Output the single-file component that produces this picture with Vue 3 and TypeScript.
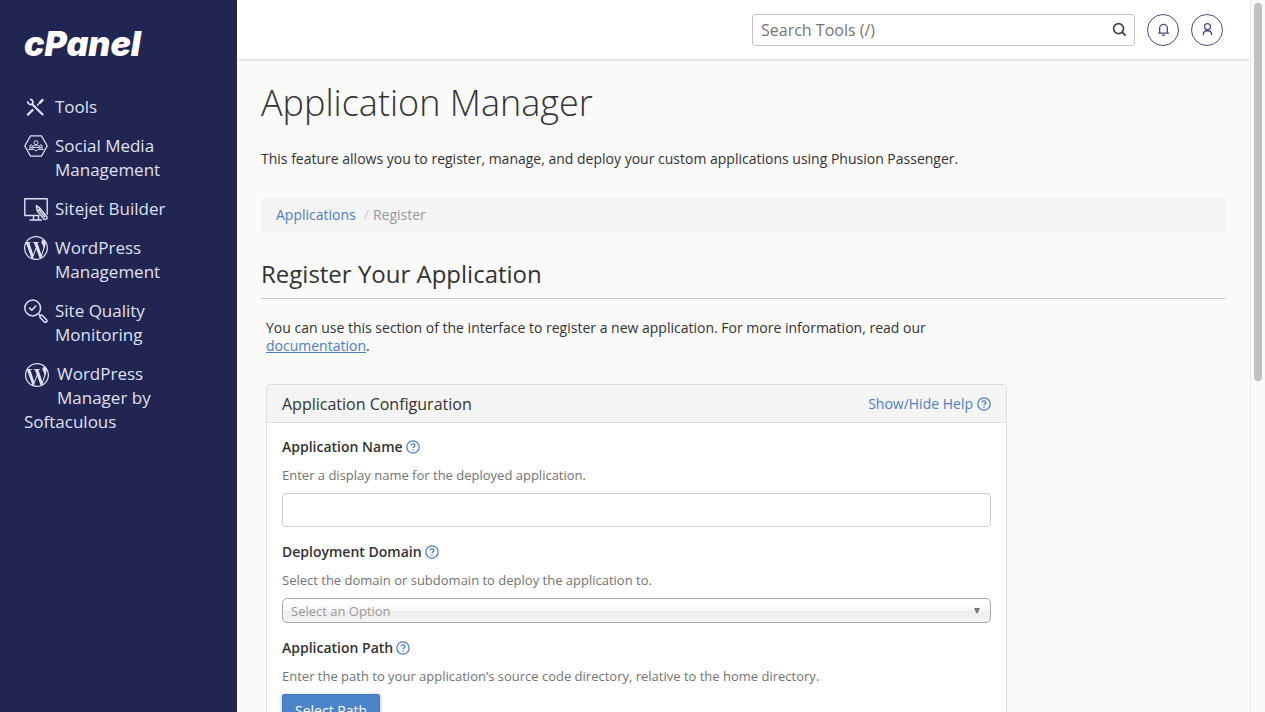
<script setup lang="ts">
import { ref } from 'vue'

interface NavItem {
  label: string
  icon: 'tools' | 'social' | 'sitejet' | 'wordpress' | 'quality'
  wrapUnder?: boolean
}

const navItems: NavItem[] = [
  { label: 'Tools', icon: 'tools' },
  { label: 'Social Media Management', icon: 'social' },
  { label: 'Sitejet Builder', icon: 'sitejet' },
  { label: 'WordPress Management', icon: 'wordpress' },
  { label: 'Site Quality Monitoring', icon: 'quality' },
  { label: 'WordPress Manager by Softaculous', icon: 'wordpress', wrapUnder: true },
]

const search = ref('')
const appName = ref('')
const domain = ref('')
</script>

<template>
  <div class="shell">
    <aside class="sidebar">
      <a class="brand" href="#" aria-label="cPanel home">cPanel</a>
      <nav class="nav" aria-label="Main">
        <a
          v-for="item in navItems"
          :key="item.label"
          href="#"
          class="nav-item"
          :class="{ 'wrap-under': item.wrapUnder }"
        >
          <svg class="nav-icon" viewBox="0 0 24 24" aria-hidden="true">
            <g v-if="item.icon === 'tools'" fill="none" stroke="currentColor" stroke-linecap="round">
              <path d="M3.9 19.600 8.600 15" stroke-width="2.200" />
              <path d="M13.400 10.200 17 6.600" stroke-width="1.300" />
              <path d="M16 7.600 18.400 5.200" stroke-width="2.600" />
              <path d="M8.200 9.200 18.600 19.400" stroke-width="2.100" />
              <path d="M3.700 6.800a3.200 3.200 0 0 0 4.800 2.300 3.200 3.200 0 0 0-1.900-4.700" stroke-width="1.700" />
            </g>
            <g v-else-if="item.icon === 'social'" fill="none" stroke="currentColor" stroke-linejoin="round">
              <path d="M6.600 1.800h10.800L23.200 12l-5.800 10.200H6.600L.8 12z" stroke-width="1.300" />
              <g stroke-width="1">
                <circle cx="12" cy="8.700" r="2" />
                <path d="M8.700 13.400c.3-3.200 6.300-3.200 6.600 0zM4.700 15.400c.2-2.200 4.600-2.200 4.800 0zM14.500 15.400c.2-2.200 4.600-2.200 4.800 0z" />
                <circle cx="7.100" cy="12.200" r="1.300" />
                <circle cx="16.900" cy="12.200" r="1.300" />
                <path d="M10.200 15.600 12 17l1.800-1.400" />
              </g>
            </g>
            <g v-else-if="item.icon === 'sitejet'" fill="none" stroke="currentColor" stroke-width="1.400" stroke-linejoin="round">
              <path d="M15.500 18.500H.8V1.800h22.400v16" />
              <path d="M9.500 18.500v4M14.500 18.500v4M5.500 23h12.500" />
              <path d="m12.300 8.600.9 5.200 6.700 8.200a1.900 1.900 0 0 0 2.900-2.400l-6.600-8.200zM13.600 13.800l2.600-2.200M15.500 13.200l5.500 7" />
            </g>
            <path
              v-else-if="item.icon === 'wordpress'"
              fill="currentColor"
              d="M21.469 6.825c.84 1.537 1.318 3.3 1.318 5.175 0 3.979-2.156 7.456-5.363 9.325l3.295-9.527c.615-1.54.82-2.771.82-3.864 0-.405-.026-.78-.07-1.11m-7.981.105c.647-.03 1.232-.105 1.232-.105.582-.075.514-.93-.067-.899 0 0-1.755.135-2.88.135-1.064 0-2.85-.15-2.85-.15-.585-.03-.661.855-.075.885 0 0 .54.061 1.125.09l1.68 4.605-2.37 7.08L5.354 6.9c.649-.03 1.234-.1 1.234-.1.585-.075.516-.93-.065-.896 0 0-1.746.138-2.874.138-.2 0-.438-.008-.69-.015C4.911 3.15 8.235 1.215 12 1.215c2.809 0 5.365 1.072 7.286 2.833-.046-.003-.091-.009-.141-.009-1.06 0-1.812.923-1.812 1.914 0 .89.513 1.643 1.06 2.531.411.72.89 1.643.89 2.977 0 .915-.354 1.994-.821 3.479l-1.075 3.585-3.9-11.61.001.014zM12 22.784c-1.059 0-2.081-.153-3.048-.437l3.237-9.406 3.315 9.087c.024.053.05.101.078.149-1.12.393-2.325.607-3.582.607M1.211 12c0-1.564.336-3.05.935-4.39L7.29 21.709C3.694 19.96 1.212 16.271 1.211 12M12 0C5.385 0 0 5.385 0 12s5.385 12 12 12 12-5.385 12-12S18.615 0 12 0"
            />
            <g v-else fill="none" stroke="currentColor" stroke-width="1.500" stroke-linecap="round" stroke-linejoin="round">
              <circle cx="8.700" cy="9" r="7.900" />
              <path d="m5.600 9.100 2.200 2.100 4-4.200M14.500 14.800l2 2" />
              <path d="M16.300 18.700c-1.400-1.500.7-3.500 2.200-2.200l4 4.200c1.400 1.500-.7 3.500-2.200 2.200z" />
            </g>
          </svg>
          <span class="nav-label">{{ item.label }}</span>
        </a>
      </nav>
    </aside>

    <div class="page">
      <header class="topbar">
        <form class="search" role="search" @submit.prevent>
          <input v-model="search" type="text" placeholder="Search Tools (/)" aria-label="Search Tools" />
          <button type="submit" aria-label="Search">
            <svg viewBox="0 0 16 16" aria-hidden="true">
              <circle cx="7" cy="7" r="5.300" fill="none" stroke="currentColor" stroke-width="1.800" />
              <path d="m11 11 3.500 3.500" stroke="currentColor" stroke-width="2" />
            </svg>
          </button>
        </form>
        <button class="round" type="button" aria-label="Notifications">
          <svg viewBox="0 0 16 16" aria-hidden="true">
            <path d="M2.500 11.800h11M3.900 11.800V6.700a4.100 4.100 0 0 1 8.200 0v5.100M6.700 14h2.600" fill="none" stroke="currentColor" stroke-width="1.400" stroke-linecap="round" />
          </svg>
        </button>
        <button class="round" type="button" aria-label="User menu">
          <svg viewBox="0 0 16 16" aria-hidden="true">
            <circle cx="8" cy="5" r="3.200" fill="none" stroke="currentColor" stroke-width="1.400" />
            <path d="M3.500 14c0-3.300 1.800-4.700 4.500-4.700s4.500 1.400 4.500 4.700" fill="none" stroke="currentColor" stroke-width="1.400" />
          </svg>
        </button>
      </header>

      <main class="content">
        <h1>Application Manager</h1>
        <p class="lead">This feature allows you to register, manage, and deploy your custom applications using Phusion Passenger.</p>

        <nav class="breadcrumb" aria-label="Breadcrumb">
          <a href="#">Applications</a>
          <span class="slash">/</span>
          <span>Register</span>
        </nav>

        <h2>Register Your Application</h2>

        <section class="register">
          <p class="intro">
            You can use this section of the interface to register a new application. For more information, read our
            <a href="#">documentation</a>.
          </p>

          <form class="panel" @submit.prevent>
            <div class="panel-head">
              <h3>Application Configuration</h3>
              <button class="link" type="button">
                Show/Hide Help
                <svg class="help-icon" viewBox="0 0 14 14" aria-hidden="true">
                  <circle cx="7" cy="7" r="6.200" />
                  <path d="M5.200 5.600c0-2.300 3.700-2.300 3.700 0C8.900 6.900 7 6.900 7 8.300M7 9.600v1.200" />
                </svg>
              </button>
            </div>
            <div class="panel-body">
              <div class="field">
                <div class="field-title">
                  <label for="app-name">Application Name</label>
                  <button class="link" type="button" aria-label="Help for Application Name">
                    <svg class="help-icon" viewBox="0 0 14 14" aria-hidden="true">
                      <circle cx="7" cy="7" r="6.200" />
                      <path d="M5.200 5.600c0-2.300 3.700-2.300 3.700 0C8.900 6.900 7 6.900 7 8.300M7 9.600v1.200" />
                    </svg>
                  </button>
                </div>
                <p>Enter a display name for the deployed application.</p>
                <input id="app-name" v-model="appName" class="text-box" type="text" />
              </div>

              <div class="field">
                <div class="field-title">
                  <label for="domain">Deployment Domain</label>
                  <button class="link" type="button" aria-label="Help for Deployment Domain">
                    <svg class="help-icon" viewBox="0 0 14 14" aria-hidden="true">
                      <circle cx="7" cy="7" r="6.200" />
                      <path d="M5.200 5.600c0-2.300 3.700-2.300 3.700 0C8.900 6.900 7 6.900 7 8.300M7 9.600v1.200" />
                    </svg>
                  </button>
                </div>
                <p>Select the domain or subdomain to deploy the application to.</p>
                <div class="select-box">
                  <select id="domain" v-model="domain">
                    <option value="">Select an Option</option>
                  </select>
                  <svg viewBox="0 0 6 6" aria-hidden="true"><path d="M0 0h6L3.500 5.500h-1z" fill="currentColor" /></svg>
                </div>
              </div>

              <div class="field">
                <div class="field-title">
                  <label for="app-path">Application Path</label>
                  <button class="link" type="button" aria-label="Help for Application Path">
                    <svg class="help-icon" viewBox="0 0 14 14" aria-hidden="true">
                      <circle cx="7" cy="7" r="6.200" />
                      <path d="M5.200 5.600c0-2.300 3.700-2.300 3.700 0C8.900 6.900 7 6.900 7 8.300M7 9.600v1.200" />
                    </svg>
                  </button>
                </div>
                <p>Enter the path to your application’s source code directory, relative to the home directory.</p>
                <button id="app-path" class="primary" type="button">Select Path</button>
              </div>
            </div>
          </form>
        </section>
      </main>
    </div>

    <div class="scrollbar" aria-hidden="true"><div class="thumb"></div></div>
  </div>
</template>

<style>
body {
  margin: 0;
  background: #fafafa;
}
</style>

<style scoped>
.shell,
.shell * {
  box-sizing: border-box;
}
.shell {
  display: flex;
  height: 100vh;
  overflow: hidden;
  font-family: "Open Sans", "Noto Sans", sans-serif;
  font-size: 14px;
  line-height: 20px;
  color: #333;
}
button,
input,
select {
  font: inherit;
  color: inherit;
}
button {
  padding: 0;
  border: 0;
  background: none;
  cursor: pointer;
}
a {
  color: #4a7fc8;
  text-decoration: none;
}
h1,
h2,
h3,
p {
  margin: 0;
}

.sidebar {
  flex: 0 0 237px;
  padding: 24px 64px 24px 24px;
  background: #212552;
}
.brand {
  display: block;
  color: #fff;
  font-family: Inter, "Open Sans", sans-serif;
  font-size: 34px;
  font-style: italic;
  font-weight: 900;
  line-height: 40px;
}
.nav {
  display: flex;
  flex-direction: column;
  gap: 15px;
  margin-top: 31px;
}
.nav-item {
  display: flex;
  gap: 7px;
  color: #dfe1f0;
  font-size: 17px;
  line-height: 24px;
}
.nav-icon {
  flex: none;
  width: 24px;
  height: 24px;
}
.wrap-under {
  display: block;
}
.wrap-under .nav-icon {
  float: left;
  margin: 1px 8px 16px 1px;
}

.page {
  display: flex;
  flex: 1;
  flex-direction: column;
  min-width: 0;
  background: #fafafa;
}
.topbar {
  display: flex;
  flex: none;
  align-items: center;
  justify-content: flex-end;
  gap: 12px;
  height: 59px;
  padding-right: 27px;
  background: #fff;
  box-shadow: 0 1px 3px rgba(0, 0, 0, 0.14);
}
.search {
  display: flex;
  align-items: center;
  width: 383px;
  height: 32px;
  padding: 0 7px 0 8px;
  border: 1px solid #bfc1cc;
  border-radius: 3px;
  background: #fff;
}
.search input {
  flex: 1;
  min-width: 0;
  padding: 0;
  border: 0;
  outline: 0;
  background: none;
  font-size: 16px;
  line-height: 24px;
}
.search input::placeholder {
  color: #757575;
  opacity: 1;
}
.search button {
  display: flex;
  color: #444;
}
.search svg {
  width: 15px;
  height: 15px;
}
.round {
  display: flex;
  align-items: center;
  justify-content: center;
  width: 32px;
  height: 32px;
  border: 1px solid #4d4f78;
  border-radius: 50%;
  color: #4d4f78;
}
.round svg {
  width: 15px;
  height: 15px;
}

.content {
  flex: 1;
  min-height: 0;
  overflow: hidden;
  padding: 22px 24px 0;
}
h1 {
  font-size: 36px;
  font-weight: 300;
  line-height: 44px;
}
.lead {
  margin-top: 24px;
}
.breadcrumb {
  display: flex;
  margin-top: 29px;
  padding: 7px 15px;
  border-radius: 4px;
  background: #f4f4f4;
  color: #999;
}
.slash {
  margin: 0 4px 0 8px;
  color: #ccc;
}
h2 {
  margin-top: 26px;
  padding-bottom: 8px;
  border-bottom: 1px solid #ccc;
  font-size: 24px;
  font-weight: 500;
  line-height: 32px;
}
.register {
  max-width: 751px;
  padding: 20px 5px 0;
}
.intro {
  line-height: 18px;
}
.intro a {
  text-decoration: underline;
}
.panel {
  margin-top: 29px;
  border: 1px solid #ddd;
  border-radius: 3px;
  background: #fff;
}
.panel-head {
  display: flex;
  align-items: center;
  justify-content: space-between;
  height: 38px;
  padding: 0 15px;
  border-bottom: 1px solid #ddd;
  background: #f4f4f4;
}
h3 {
  font-size: 16px;
  font-weight: 500;
}
.link {
  display: flex;
  align-items: center;
  gap: 4px;
  color: #4a7fc8;
}
.help-icon {
  width: 14px;
  height: 14px;
  fill: none;
  stroke: currentColor;
  stroke-width: 1.3;
}
.panel-body {
  display: flex;
  flex-direction: column;
  gap: 15px;
  padding: 14px 15px;
}
.field {
  display: flex;
  flex-direction: column;
  align-items: flex-start;
  gap: 8px;
}
.field-title {
  display: flex;
  align-items: center;
  gap: 3px;
  font-weight: 600;
}
.field p {
  color: #737373;
  font-size: 13px;
}
.text-box {
  width: 100%;
  height: 34px;
  padding: 6px 12px;
  border: 1px solid #ccc;
  border-radius: 4px;
  background: #fff;
}
.select-box {
  position: relative;
  width: 100%;
}
.select-box select {
  display: block;
  width: 100%;
  height: 25px;
  padding: 0 24px 0 8px;
  appearance: none;
  border: 1px solid #aaa;
  border-radius: 5px;
  background: linear-gradient(#fff 20%, #f6f6f6 50%, #eee 52%, #f4f4f4 100%);
  color: #999;
  font-size: 13px;
}
.select-box svg {
  position: absolute;
  top: 10px;
  right: 11px;
  width: 6px;
  height: 6px;
  color: #777;
  pointer-events: none;
}
.primary {
  padding: 6px 12px;
  border: 1px solid #4379bd;
  border-radius: 2px;
  background: #4c84ca;
  box-shadow: 0 1px 4px rgba(0, 0, 0, 0.3);
  color: #fff;
}

.scrollbar {
  flex: 0 0 15px;
  padding: 3px;
  border-left: 1px solid #e8e8e8;
  background: #fafafa;
}
.thumb {
  width: 8px;
  height: 53.5%;
  border-radius: 4px;
  background: #c1c1c1;
}
</style>
